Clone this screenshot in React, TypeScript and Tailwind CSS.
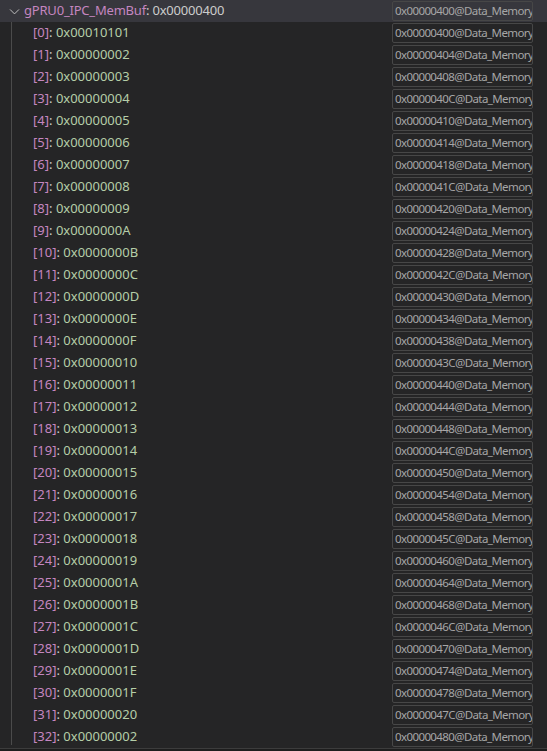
import React from "react";

const values = [
  "0x00010101","0x00000002","0x00000003","0x00000004","0x00000005","0x00000006","0x00000007","0x00000008","0x00000009","0x0000000A",
  "0x0000000B","0x0000000C","0x0000000D","0x0000000E","0x0000000F","0x00000010","0x00000011","0x00000012","0x00000013","0x00000014",
  "0x00000015","0x00000016","0x00000017","0x00000018","0x00000019","0x0000001A","0x0000001B","0x0000001C","0x0000001D","0x0000001E",
  "0x0000001F","0x00000020","0x00000002",
];

function addr(i: number) {
  return "0x" + (0x400 + i * 4).toString(16).toUpperCase().padStart(8, "0") + "@Data_Memory";
}

function Box({ text }: { text: string }) {
  return (
    <div className="w-[141px] h-[20px] border border-[#474747] rounded-[2px] flex items-center pl-[2px] text-[#a6a6a6] text-[11.5px] tracking-[-0.6px] overflow-hidden whitespace-nowrap">
      {text}
    </div>
  );
}

export default function App() {
  return (
    <div
      className="w-[547px] h-[751px] bg-[#252526] flex flex-col overflow-hidden text-[13px] text-[#cccccc]"
      style={{ fontFamily: '"Segoe UI", "Noto Sans", sans-serif' }}
    >
      <div className="h-[22px] bg-[#37373d] flex items-center shrink-0">
        <div className="w-[24px] shrink-0 flex items-center justify-start pl-[9px]">
          <svg width="11" height="11" viewBox="0 0 16 16" fill="none" stroke="#c5c5c5" strokeWidth="1.4" className="shrink-0">
            <path d="M1.5 5l6.5 6.5 6.5-6.5" />
          </svg>
        </div>
        <div className="flex-1 whitespace-nowrap tracking-[-0.2px]">
          <span className="text-[#c586c0]">gPRU0_IPC_MemBuf</span>
          <span>: </span>
          <span className="text-[#cccccc]">0x00000400</span>
        </div>
        <div className="mr-[14px]">
          <Box text="0x00000400@Data_Memory" />
        </div>
      </div>
      <div className="flex-1 flex">
        <div className="w-[11px] shrink-0" />
        <div className="w-[1px] bg-[#4b4b4b] shrink-0 mb-[3px]" />
        <div className="flex-1 flex flex-col">
          {values.map((v, i) => (
            <div key={i} className="h-[22px] flex items-center shrink-0">
              <div className="w-[21px] shrink-0" />
              <div className="flex-1 whitespace-nowrap">
                <span className="text-[#c586c0]">[{i}]</span>
                <span>: </span>
                <span className="text-[#b5cea8]">{v}</span>
              </div>
              <div className="mr-[14px]">
                <Box text={addr(i)} />
              </div>
            </div>
          ))}
        </div>
      </div>
      <div className="h-[1px] bg-[#3c3c3c] shrink-0" />
      <div className="h-[2px] bg-[#1e1e1e] shrink-0" />
    </div>
  );
}
